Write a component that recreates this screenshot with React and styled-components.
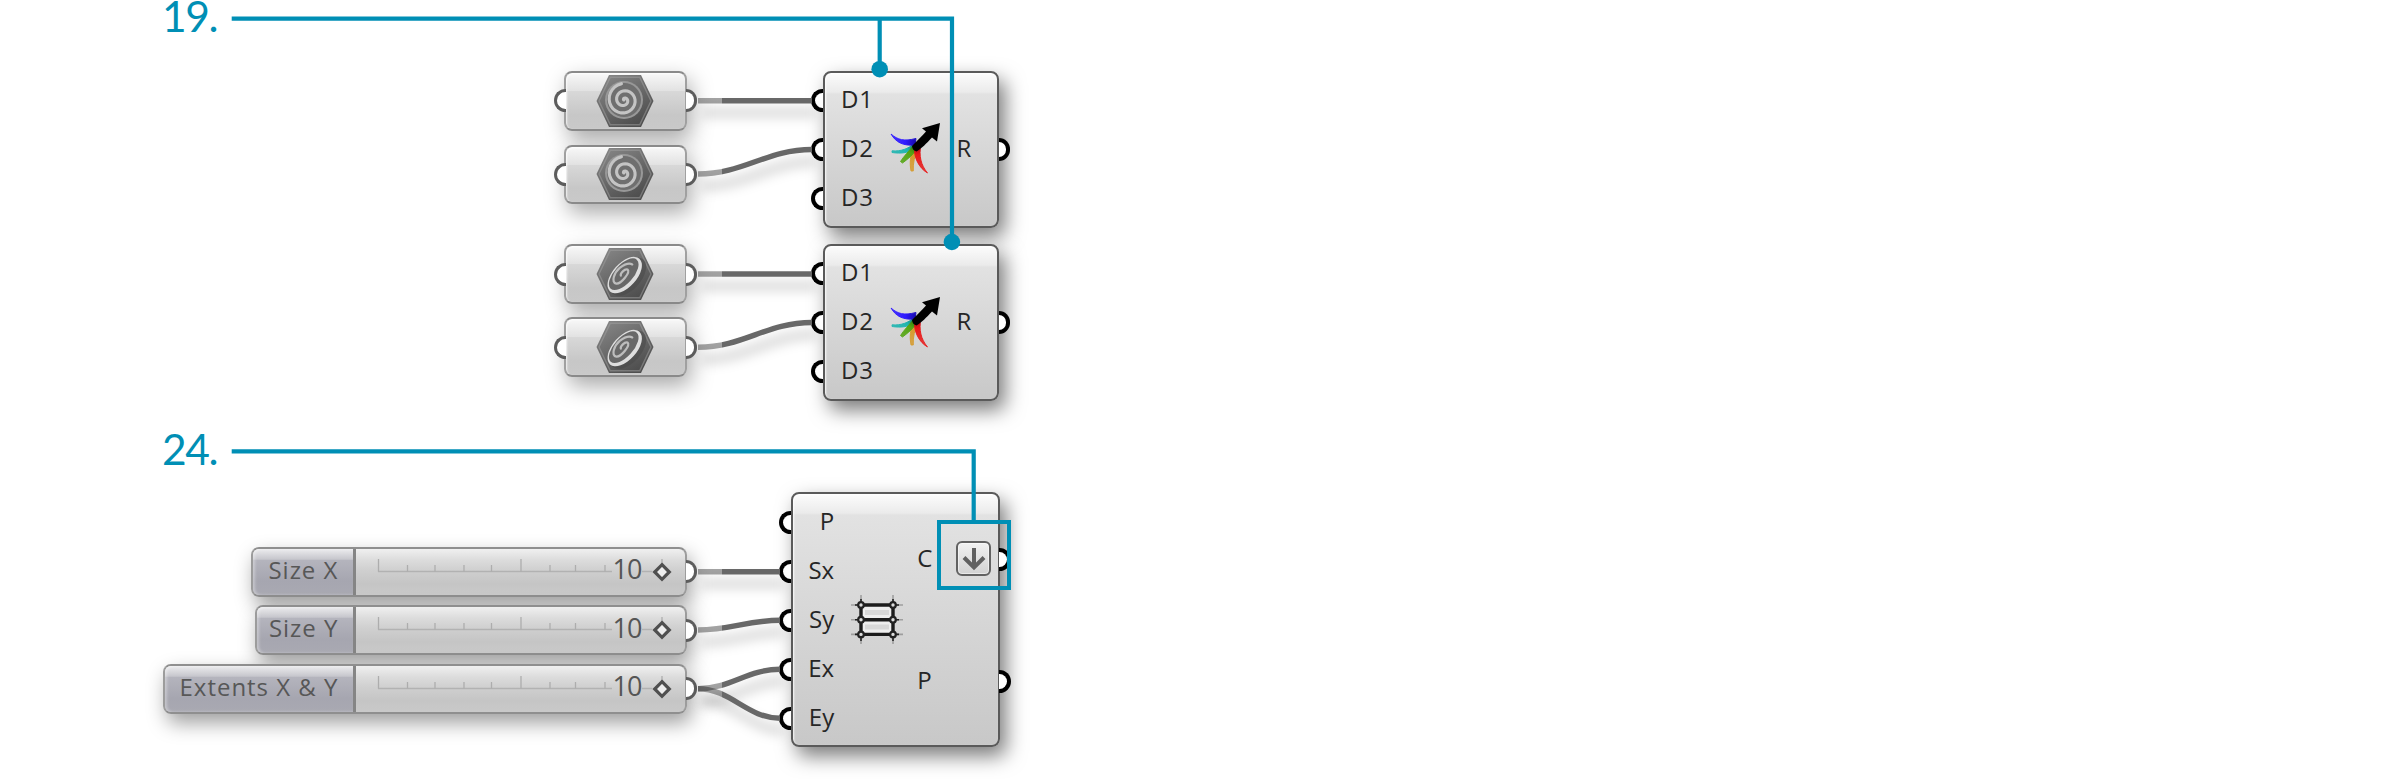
import React from "react";
import styled, { createGlobalStyle, css } from "styled-components";

const GlobalStyle = createGlobalStyle`
  html, body { margin: 0; background: #fff; overflow: hidden; }
  * { box-sizing: border-box; }
`;

const ACCENT = "#008fb5";

const Canvas = styled.main`
  position: relative;
  width: 2400px;
  height: 779px;
  overflow: hidden;
  background: #fff;
  font-family: "Open Sans", "Noto Sans", sans-serif;
  font-size: 24px;
  line-height: 1;
`;

const Layer = styled.svg`
  position: absolute;
  inset: 0;
  pointer-events: none;
`;

const placed = css`
  position: absolute;
  left: ${(p) => p.$x}px;
  top: ${(p) => p.$y}px;
  width: ${(p) => p.$w}px;
  height: ${(p) => p.$h}px;
`;

const StepNumber = styled.div`
  position: absolute;
  left: ${(p) => p.$x}px;
  top: ${(p) => p.$y}px;
  font: 400 42.5px/32px Lato, sans-serif;
  letter-spacing: -1.4px;
  color: ${ACCENT};
  white-space: nowrap;
`;

const Port = styled.span`
  position: absolute;
  top: 50%;
  width: 11.5px;
  height: 23px;
  margin-top: -11.5px;
  background: #fff;
  border: ${(p) => (p.$soft ? "3.4px solid #5c5c5c" : "4px solid #000")};
  ${(p) =>
    p.$side === "left"
      ? `left: ${p.$out || -12}px; border-right: 0; border-radius: 12px 0 0 12px;`
      : `right: ${p.$out || -12}px; border-left: 0; border-radius: 0 12px 12px 0;`}
`;

const ParamNode = styled.section`
  ${placed}
  display: flex;
  align-items: center;
  justify-content: center;
  padding-right: 2px;
  border: 2px solid #a0a0a0;
  border-top-color: #8a8a8a;
  border-bottom-color: #8a8a8a;
  border-radius: 8px;
  background: linear-gradient(#f8f8f8 0, #e2e2e2 32%, #d8d8d8 33%, #c7c7c7 75%, #c9c9c9);
  box-shadow: 4px 9px 22px rgba(0, 0, 0, 0.34), inset 1px 1px 2px rgba(255, 255, 255, 0.8);
`;

const ComponentNode = styled.section`
  ${placed}
  display: grid;
  grid-template-columns: ${(p) => p.$cols};
  padding: ${(p) => p.$pad || "3px 0"};
  border: 2px solid #5a5a5a;
  border-radius: 8px;
  background: linear-gradient(#fcfcfc 0, #ebebeb 19px, #e2e2e2 21px, #c8c8c8 100%);
  box-shadow: 6px 9px 20px rgba(0, 0, 0, 0.52), inset 1px 1px 2px rgba(255, 255, 255, 0.9);
  color: #262626;
`;

const PortColumn = styled.div`
  display: flex;
  flex-direction: column;
`;

const PortRow = styled.div`
  position: relative;
  flex: 1;
  display: flex;
  align-items: center;
  justify-content: ${(p) => p.$justify || "flex-start"};
  padding: ${(p) => p.$pad};
`;

const PortName = styled.span`
  letter-spacing: ${(p) => p.$spacing || 0}px;
`;

const IconCell = styled.div`
  display: flex;
  align-items: center;
  justify-content: flex-start;
`;

const FlattenBadge = styled.span`
  display: grid;
  place-items: center;
  width: 35px;
  height: 35px;
  margin: 2px 0 0 24px;
  border: 2.4px solid #626262;
  border-radius: 6px;
  background: linear-gradient(#f1f1f1, #d2d2d2);
  box-shadow: inset 0 0 0 1px rgba(255, 255, 255, 0.5);
`;

const SliderNode = styled.section`
  ${placed}
  display: flex;
  border: 2px solid #8f8f8f;
  border-left-color: #9c9c9c;
  border-right-color: #9c9c9c;
  border-radius: 8px;
  background: linear-gradient(#f0f0f0 0, #dcdcdc 24%, #d0d0d0 45%, #c5c5c5 75%, #c9c9c9);
  box-shadow: 4px 9px 20px rgba(0, 0, 0, 0.38);
`;

const SliderName = styled.div`
  flex: 1;
  display: flex;
  align-items: center;
  justify-content: flex-end;
  padding: 0 14.5px 4px 0;
  border-right: 3px solid #858585;
  border-radius: 6px 0 0 6px;
  background: linear-gradient(#ececee 0, #c7c7cd 22%, #b4b4bd 25%, #a6a6b0 70%, #a9a9b2);
  box-shadow: inset 2px 0 3px rgba(255, 255, 255, 0.35);
  color: #575757;
  letter-spacing: 0.98px;
  white-space: nowrap;
`;

const SliderTrack = styled.div`
  position: relative;
  width: 329.5px;
  display: flex;
  align-items: center;
`;

const SliderValue = styled.span`
  position: relative;
  margin-left: auto;
  padding-bottom: 6px;
  font-size: 27px;
  letter-spacing: -1px;
  color: #555;
`;

const Scale = styled.svg`
  position: absolute;
  left: 0;
  top: 0;
`;

const Grip = styled.svg`
  position: relative;
  margin: 0 13px 0 11px;
`;

const Highlight = styled.div`
  ${placed}
  border: 4px solid ${ACCENT};
`;

function spiral(turns, radius, phase) {
  const steps = 60;
  let d = "";
  for (let i = 0; i <= steps; i++) {
    const t = i / steps;
    const a = phase + t * turns * Math.PI * 2;
    const r = radius * t;
    d += `${i ? "L" : "M"}${(Math.cos(a) * r).toFixed(2)} ${(Math.sin(a) * r).toFixed(2)}`;
  }
  return d;
}

function HexIcon({ tilted, id }) {
  return (
    <svg width="60" height="54" viewBox="-30 -27 60 54">
      <defs>
        <linearGradient id={id} x1="0" y1="0" x2="0.6" y2="1">
          <stop offset="0" stopColor="#8a8a8a" />
          <stop offset="1" stopColor="#4f4f4f" />
        </linearGradient>
      </defs>
      <path d="M-28.5 0L-16 -26H16L28.5 0L16 26H-16Z" fill={`url(#${id})`} />
      <path d="M-26 0L-14.7 -23.8H14.7L26 0L14.7 23.8H-14.7Z" fill="none" stroke="#a2a2a2" strokeWidth="1.4" opacity="0.5" />
      {tilted ? (
        <g transform="rotate(-48)">
          <ellipse cx="0" cy="4" rx="23" ry="13" fill="#484848" opacity="0.55" />
          <ellipse cx="-1" cy="0.5" rx="22" ry="12" fill="#dedede" />
          <ellipse cx="-1" cy="-0.8" rx="19.5" ry="9.4" fill="#686868" />
          <path d="M-4 -2C-3 -4 4 -4 5 -1C5 3 -10 4 -13 0C-16 -5 -6 -9 1 -8C6 -7 11 -5 12 -1" fill="none" stroke="#bdbdbd" strokeWidth="2.200" strokeLinecap="round" />
        </g>
      ) : (
        <g transform="translate(-1 -1)">
          <circle r="19" fill="#989898" />
          <circle r="17" fill="#6f6f6f" />
          <path d={spiral(2.2, 16.5, Math.PI * 1.05)} fill="none" stroke="#c4c4c4" strokeWidth="3.100" strokeLinecap="round" />
        </g>
      )}
    </svg>
  );
}

function MergeIcon({ id }) {
  const strands = [
    ["#20b5b0", "#0c5a5a", "M3 28.800C12 29.500 19 27 26 21L29 25C20 31 12 32 3 30.500Z"],
    ["#d69a2c", "#6a5a10", "M22 49C20.500 41 21 34 25 25L29 26C25.500 34 24 41 24.300 49Z"],
    ["#55a512", "#126008", "M11.500 39.500C15 34 20 29 25 23L29 25C25 32 19 37 13.500 41Z"],
    ["#2f1aff", "#1408a0", "M2 12C9 18 15 19.500 27 16.500L26 23C14 24 7 20.500 2 12Z"],
    ["#e81a1a", "#900010", "M38.500 51C30 46 25 36 25.500 26L32 22C29.500 34 32 43 38.500 51Z"],
  ];
  return (
    <svg width="54" height="54" viewBox="0 0 54 54">
      <defs>
        {strands.map(([a, b], i) => (
          <radialGradient key={a} id={`${id}-${i}`} gradientUnits="userSpaceOnUse" cx="28" cy="21" r="26">
            <stop offset="0" stopColor={b} />
            <stop offset="0.45" stopColor={a} />
            <stop offset="1" stopColor={a} stopOpacity="0.85" />
          </radialGradient>
        ))}
      </defs>
      {strands.map(([a, , d], i) => (
        <path key={a} d={d} fill={`url(#${id}-${i})`} stroke={`url(#${id}-${i})`} strokeWidth="1" strokeLinejoin="round" />
      ))}
      <path d="M51 1L48 19.500L43 15.500C37 22 33 26 27.500 29.500C25 29 23.200 27 23 24C28 19 33 14 37 9.500L33 6.200Z" fill="#000" />
    </svg>
  );
}

function GridIcon() {
  const xs = [11, 43];
  const ys = [10, 24.7, 39.4];
  return (
    <svg width="54" height="50" viewBox="0 0 54 50">
      <rect x="11" y="10" width="32" height="29.4" fill="#eee" />
      <path d="M15 17.500H39M15 32H39" stroke="#d8d8d8" strokeWidth="5" />
      <path d="M11 0V49M43 0V49M1 10H53M1 24.700H53M1 39.400H53" stroke="#888" strokeWidth="1.6" opacity="0.7" />
      <path d="M11 4V46M43 4V46M5 10H49M5 24.700H49M5 39.400H49" stroke="#222" strokeWidth="1.6" />
      <path d="M11 10V39.400M43 10V39.400M11 10H43M11 24.700H43M11 39.400H43" stroke="#1c1c1c" strokeWidth="3.4" />
      {xs.map((x) =>
        ys.map((y) => (
          <circle key={`${x}-${y}`} cx={x} cy={y} r="2.8" fill="#ddd" stroke="#222" strokeWidth="2.2" />
        ))
      )}
    </svg>
  );
}

function Param({ x, y, h, tilted, id }) {
  return (
    <ParamNode $x={x} $y={y} $w={123.4} $h={h}>
      <Port $side="left" $soft />
      <HexIcon tilted={tilted} id={id} />
      <Port $side="right" $soft />
    </ParamNode>
  );
}

function MergeNode({ y, id }) {
  return (
    <ComponentNode $x={823} $y={y} $w={176.4} $h={157} $cols="64px 1fr 47px">
      <PortColumn>
        {["D1", "D2", "D3"].map((name) => (
          <PortRow key={name} $pad="0 0 3px 16px">
            <Port $side="left" $out={-14} />
            <PortName $spacing={0.9}>{name}</PortName>
          </PortRow>
        ))}
      </PortColumn>
      <IconCell>
        <MergeIcon id={id} />
      </IconCell>
      <PortColumn>
        <PortRow $pad="0 0 3px 6px">
          <PortName>R</PortName>
          <Port $side="right" $out={-13} />
        </PortRow>
      </PortColumn>
    </ComponentNode>
  );
}

function Slider({ x, y, name }) {
  const ticks = [22.5, 51.5, 79, 108, 135.5, 165, 194, 219.5, 249, 306];
  return (
    <SliderNode $x={x} $y={y} $w={687.4 - x} $h={49.6}>
      <SliderName>{name}</SliderName>
      <SliderTrack>
        <Scale width="330" height="46">
          <path d="M22 22.500H256M286 22.500H296" stroke="#b2b2b2" strokeWidth="1.5" />
          {ticks.map((t, i) => (
            <path key={t} d={`M${t} ${i % 5 === 0 || t === 306 ? 10 : 16}V22.500`} stroke="#adadad" strokeWidth="1.3" />
          ))}
        </Scale>
        <SliderValue>10</SliderValue>
        <Grip width="20" height="20" viewBox="-10 -10 20 20">
          <path d="M0 -7.300L7.300 0L0 7.300L-7.300 0Z" fill="#eee" stroke="#505050" strokeWidth="3.2" />
        </Grip>
      </SliderTrack>
      <Port $side="right" $soft />
    </SliderNode>
  );
}

const wires = [
  [698, 100.7, 812, 100.7],
  [698, 174, 812, 149.5],
  [698, 274, 812, 274],
  [698, 347.3, 812, 322.5],
  [698, 571.7, 780, 571.7],
  [698, 630, 780, 620.3],
  [698, 688.7, 780, 669.3],
  [698, 688.7, 780, 718.3],
];

function Wires() {
  return (
    <Layer width="1100" height="779">
      <defs>
        <linearGradient id="wire" gradientUnits="userSpaceOnUse" x1="698" y1="0" x2="812" y2="0">
          <stop offset="0.208" stopColor="#000" stopOpacity="0.36" />
          <stop offset="0.212" stopColor="#686868" />
        </linearGradient>
        <filter id="wireShadow" filterUnits="userSpaceOnUse" x="660" y="40" width="200" height="739">
          <feGaussianBlur stdDeviation="6" />
        </filter>
      </defs>
      {wires.map(([x1, y1, x2, y2], i) => {
        const m = (x2 - x1) * 0.4;
        const curve = `M${x1} ${y1}C${x1 + m} ${y1} ${x2 - m} ${y2} ${x2} ${y2}`;
        return (
          <g key={i} fill="none">
            <path d={curve} transform="translate(4 12)" stroke="#000" strokeOpacity="0.16" strokeWidth="9" filter="url(#wireShadow)" />
            <path d={curve} stroke="url(#wire)" strokeWidth="5.4" />
          </g>
        );
      })}
    </Layer>
  );
}

function Callouts() {
  return (
    <Layer width="1100" height="779" fill="none" stroke={ACCENT} strokeWidth="4.2">
      <path d="M231.700 18.700H952V242" />
      <path d="M879.700 18.700V69" />
      <path d="M231.700 451.300H973.700V521" />
      <circle cx="879.7" cy="69.2" r="8.3" fill={ACCENT} stroke="none" />
      <circle cx="951.9" cy="242" r="8.3" fill={ACCENT} stroke="none" />
    </Layer>
  );
}

export default function App() {
  return (
    <Canvas>
      <GlobalStyle />
      <Param x={564} y={70.8} h={60} id="hexA" />
      <Param x={564} y={144.6} h={59} id="hexB" />
      <Param x={564} y={244} h={60} tilted id="hexC" />
      <Param x={564} y={317.4} h={59.5} tilted id="hexD" />
      <MergeNode y={70.7} id="mergeA" />
      <MergeNode y={244.3} id="mergeB" />

      <Slider x={251.3} y={547} name="Size X" />
      <Slider x={254.7} y={605.4} name="Size Y" />
      <Slider x={163.3} y={664} name="Extents X & Y" />
      <ComponentNode $x={791.2} $y={492} $w={208.4} $h={254.7} $cols="57px 64px 1fr" $pad="4px 0 2px">
        <PortColumn>
          {["P", "Sx", "Sy", "Ex", "Ey"].map((name) => (
            <PortRow key={name} $justify="flex-end" $pad="0 16px 3px 0">
              <Port $side="left" $out={-14} />
              <PortName>{name}</PortName>
            </PortRow>
          ))}
        </PortColumn>
        <IconCell>
          <GridIcon />
        </IconCell>
        <PortColumn>
          <PortRow $pad="0 0 3px 3px">
            <PortName>C</PortName>
            <FlattenBadge>
              <svg width="28" height="28" viewBox="0 0 28 28" fill="none" stroke="#606060" strokeWidth="4">
                <path d="M14 3V23" />
                <path d="M4 12.500L14 22.500L24 12.500" />
              </svg>
            </FlattenBadge>
            <Port $side="right" $out={-13} />
          </PortRow>
          <PortRow $pad="0 0 3px 3px">
            <PortName>P</PortName>
            <Port $side="right" $out={-13} />
          </PortRow>
        </PortColumn>
      </ComponentNode>

      <Wires />
      <StepNumber $x={162} $y={-0.5}>19.</StepNumber>
      <StepNumber $x={162} $y={433}>24.</StepNumber>
      <Callouts />
      <Highlight $x={937} $y={520} $w={73.6} $h={70} />
    </Canvas>
  );
}
